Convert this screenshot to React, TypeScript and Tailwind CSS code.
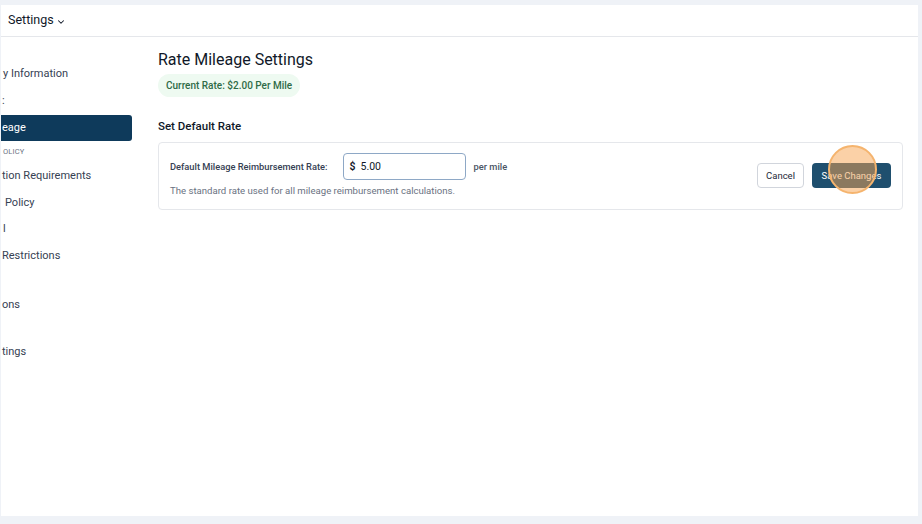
import React from 'react';

const font = { fontFamily: 'Roboto, "Noto Sans", sans-serif' };

interface NavRow {
  label: string;
  kind: 'item' | 'header' | 'active' | 'blank';
  h: string;
  indent?: string;
}

// the sidebar is scrolled sideways in the screenshot, only the tails of the labels show
const navRows: NavRow[] = [
  { label: 'y Information', kind: 'item', h: 'h-[27px]', indent: 'pl-[2px]' },
  { label: ':', kind: 'item', h: 'h-[27px]', indent: 'pl-[1px]' },
  { label: 'eage', kind: 'active', h: 'h-[26px]' },
  { label: 'OLICY', kind: 'header', h: 'h-[22px]' },
  { label: 'tion Requirements', kind: 'item', h: 'h-[27px]' },
  { label: 'Policy', kind: 'item', h: 'h-[26px]', indent: 'pl-[4px]' },
  { label: 'l', kind: 'item', h: 'h-[27px]', indent: 'pl-[2px]' },
  { label: 'Restrictions', kind: 'item', h: 'h-[26px]' },
  { label: '', kind: 'blank', h: 'h-[23px]' },
  { label: 'ons', kind: 'item', h: 'h-[26px]' },
  { label: '', kind: 'blank', h: 'h-[21px]' },
  { label: 'tings', kind: 'item', h: 'h-[27px]' },
];

function Sidebar() {
  return (
    <aside className="w-[139px] shrink-0 pt-[24px]">
      <nav className="flex flex-col">
        {navRows.map((row, i) => {
          if (row.kind === 'blank') return <div key={i} className={row.h} />;
          if (row.kind === 'header') {
            return (
              <div key={i} className={`${row.h} flex items-center pl-[2px] text-[7.5px] uppercase tracking-wide text-gray-500`}>
                {row.label}
              </div>
            );
          }
          if (row.kind === 'active') {
            return (
              <div key={i} className={`${row.h} flex items-center mr-[8px] pl-[1px] bg-[#0e3a5b] rounded-r-[3px] text-white text-[11px]`}>
                {row.label}
              </div>
            );
          }
          return (
            <div key={i} className={`${row.h} flex items-center ${row.indent ?? 'pl-[1px]'} text-[11px] text-gray-700 whitespace-nowrap`}>
              {row.label}
            </div>
          );
        })}
      </nav>
    </aside>
  );
}

function RateCard() {
  return (
    <div className="mt-[7px] flex items-center justify-between rounded-[4px] border border-gray-200 px-[11px] pt-[10px] pb-[10px]">
      <div className="flex flex-col">
        <div className="flex items-center">
          <span className="text-[9.3px] font-medium text-gray-700">Default Mileage Reimbursement Rate:</span>
          <div className="ml-[15px] flex h-[27px] w-[123px] items-center rounded-[4px] border border-[#8ea8c6] px-[6px] text-[10.5px] text-gray-900">
            <span className="font-semibold">$</span>
            <span className="ml-[5px]">5.00</span>
          </div>
          <span className="ml-[8px] text-[9.3px] font-medium text-gray-600">per mile</span>
        </div>
        <p className="mt-[4px] text-[9.6px] text-gray-500">The standard rate used for all mileage reimbursement calculations.</p>
      </div>
      <div className="flex items-center gap-[8px]">
        <button className="h-[25px] w-[47px] rounded-[4px] border border-gray-300 bg-white text-[9.5px] text-gray-800">Cancel</button>
        <button className="relative h-[25px] w-[79px] rounded-[4px] bg-[#1f4f6e] text-[9.5px] text-white">
          Save Changes
          <span className="absolute left-[16px] top-[-18px] h-[49px] w-[49px] rounded-full border-2 border-[#f5b46e] bg-[#f7a34f]/50" />
        </button>
      </div>
    </div>
  );
}

export default function App() {
  return (
    <div className="h-[524px] w-[922px] bg-[#eff2f7] pt-[5px] pb-[8px] pl-px pr-[4px]" style={font}>
      <div className="flex h-full flex-col bg-white">
        <header className="flex h-[32px] shrink-0 items-center border-b border-gray-200 pl-[7px]">
          <span className="text-[12.5px] text-gray-900">Settings</span>
          <svg width="10" height="10" viewBox="0 0 24 24" fill="none" stroke="currentColor" strokeWidth="2.5" strokeLinecap="round" strokeLinejoin="round" className="ml-[2px] mt-[2px] text-gray-900">
            <polyline points="6 9 12 15 18 9" />
          </svg>
        </header>
        <div className="flex flex-1">
          <Sidebar />
          <main className="flex-1 pl-[18px] pr-[15px] pt-[12px]">
            <h1 className="text-[16px] leading-[21px] text-gray-900">Rate Mileage Settings</h1>
            <div className="mt-[4px] inline-flex h-[23px] items-center rounded-full bg-[#eefaf1] px-[8px] text-[10px] font-medium text-[#2f6b47]">
              Current Rate: $2.00 Per Mile
            </div>
            <h2 className="mt-[21px] text-[11.5px] font-medium text-gray-900">Set Default Rate</h2>
            <RateCard />
          </main>
        </div>
      </div>
    </div>
  );
}
